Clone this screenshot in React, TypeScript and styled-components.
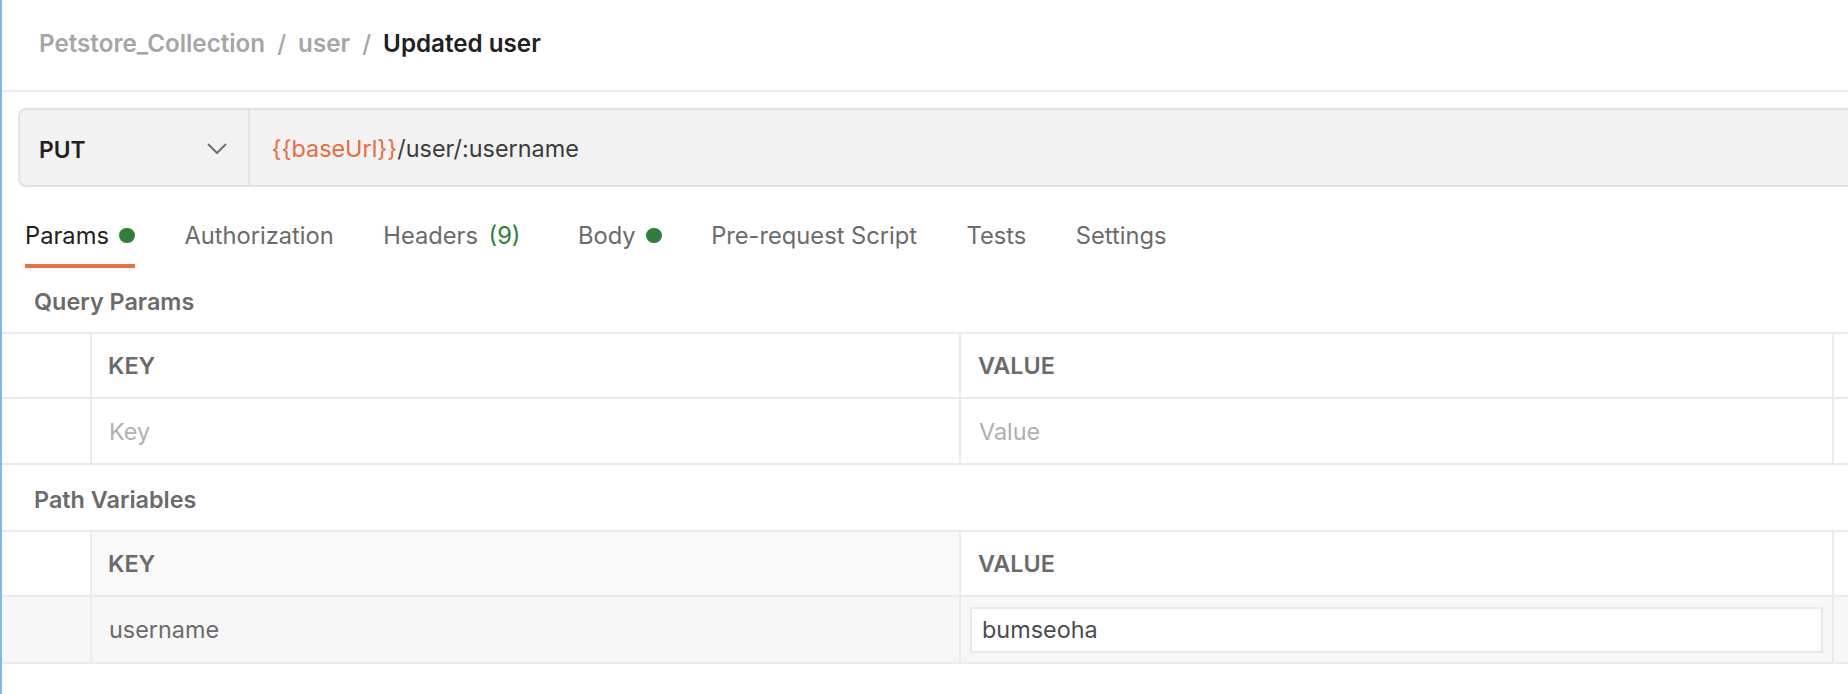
import React from "react";
import styled, { createGlobalStyle } from "styled-components";

const GlobalStyle = createGlobalStyle`
  html, body { margin: 0; padding: 0; background: #ffffff; }
  body { font-family: Inter, "Noto Sans", sans-serif; overflow: hidden; }
  * { box-sizing: border-box; }
`;

const LINE = "#ebebeb";

const Page = styled.div`
  display: flex;
  flex-direction: column;
  width: 1848px;
  height: 694px;
  overflow: hidden;
  border-left: 2px solid #82b4f8;
  background: #ffffff;
`;

const Header = styled.header`
  display: flex;
  align-items: center;
  gap: 12px;
  height: 92px;
  padding: 0 0 4px 37px;
  border-bottom: 2px solid #ededed;
  font-size: 24.2px;
  font-weight: 600;
  color: #a6a6a6;
  white-space: nowrap;
`;

const Crumb = styled.span<{ $current?: boolean }>`
  color: ${p => (p.$current ? "#212121" : "#a6a6a6")};
`;

const Sep = styled.span`
  color: #a6a6a6;
  font-weight: 500;
`;

const UrlArea = styled.div`
  display: flex;
  padding: 16px 0 0 16px;
  margin-right: -24px;
`;

const UrlBar = styled.div`
  display: flex;
  align-items: stretch;
  flex: 1;
  height: 79px;
  border: 2px solid #e3e3e3;
  border-radius: 8px;
  background: #f2f2f2;
`;

const Method = styled.div`
  display: flex;
  align-items: center;
  justify-content: space-between;
  width: 230px;
  padding: 3px 21px 0 19px;
  border-right: 2px solid #e3e3e3;
  font-size: 22.8px;
  font-weight: 600;
  color: #212121;
`;

const Chevron = styled.svg`
  width: 20px;
  height: 12px;
  flex: none;
`;

const UrlText = styled.div`
  display: flex;
  align-items: center;
  padding: 2px 0 0 21.5px;
  font-size: 23.4px;
  color: #3c3c3c;
  white-space: nowrap;
`;

const Variable = styled.span`
  color: #e56e43;
`;

const Tabs = styled.nav`
  display: flex;
  gap: 49.5px;
  margin-top: 20px;
  padding-left: 23px;
`;

const Tab = styled.div<{ $active?: boolean; $extra?: number }>`
  display: flex;
  align-items: center;
  gap: 10.5px;
  height: 61px;
  border-bottom: 4px solid ${p => (p.$active ? "#ea7246" : "transparent")};
  margin-right: ${p => p.$extra ?? 0}px;
  font-size: 23.7px;
  color: ${p => (p.$active ? "#212121" : "#6b6b6b")};
  white-space: nowrap;
`;

const Dot = styled.span`
  width: 15.5px;
  height: 15.5px;
  border-radius: 50%;
  background: #317d3b;
  flex: none;
`;

const Count = styled.span`
  color: #317d3b;
`;

const SectionTitle = styled.h3<{ $top?: number }>`
  margin: 0;
  padding: ${p => p.$top ?? 20}px 0 16px 32px;
  line-height: 28px;
  font-size: 23.4px;
  font-weight: 600;
  color: #6b6b6b;
`;

const Table = styled.div`
  display: grid;
  grid-template-columns: 90px 869px 873px 1fr;
  border-top: 2px solid ${LINE};
`;

const Cell = styled.div<{ $h: number; $bg?: string; $last?: boolean; $pad?: number }>`
  display: flex;
  align-items: center;
  height: ${p => p.$h}px;
  padding: 0 ${p => p.$pad ?? 16}px;
  background: ${p => p.$bg ?? "#ffffff"};
  border-bottom: 2px solid ${LINE};
  border-right: ${p => (p.$last ? "none" : `2px solid ${LINE}`)};
  font-size: 23.4px;
  color: #6b6b6b;
  white-space: nowrap;
`;

const HeadLabel = styled.span`
  font-weight: 600;
  color: #6b6b6b;
`;

const Placeholder = styled.span`
  padding-left: 1px;
  color: #b0b0b0;
`;

const KeyText = styled.span`
  padding-left: 1px;
  color: #6b6b6b;
`;

const ValueInput = styled.div`
  display: flex;
  align-items: center;
  width: 100%;
  height: 46px;
  padding: 0 10px;
  background: #ffffff;
  border: 2px solid #e9e9e9;
  font-size: 23.4px;
  color: #4d4d4d;
`;

const HEAD_H = 65;
const BODY_H = 66;

export default function App() {
  return (
    <>
      <GlobalStyle />
      <Page>
        <Header>
          <Crumb>Petstore_Collection</Crumb>
          <Sep>/</Sep>
          <Crumb>user</Crumb>
          <Sep>/</Sep>
          <Crumb $current>Updated user</Crumb>
        </Header>

        <UrlArea>
          <UrlBar>
            <Method>
              <span>PUT</span>
              <Chevron viewBox="0 0 20 12" fill="none">
                <path d="M1.5 1.5 L10 10 L18.5 1.5" stroke="#6b6b6b" strokeWidth="1.8" strokeLinecap="round" strokeLinejoin="round" />
              </Chevron>
            </Method>
            <UrlText>
              <Variable>{"{{baseUrl}}"}</Variable>
              /user/:username
            </UrlText>
          </UrlBar>
        </UrlArea>

        <Tabs>
          <Tab $active>
            Params <Dot />
          </Tab>
          <Tab>Authorization</Tab>
          <Tab $extra={8}>
            Headers <Count>(9)</Count>
          </Tab>
          <Tab>
            Body <Dot />
          </Tab>
          <Tab>Pre-request Script</Tab>
          <Tab>Tests</Tab>
          <Tab>Settings</Tab>
        </Tabs>

        <SectionTitle>Query Params</SectionTitle>
        <Table>
          <Cell $h={HEAD_H} />
          <Cell $h={HEAD_H}><HeadLabel>KEY</HeadLabel></Cell>
          <Cell $h={HEAD_H} $pad={17}><HeadLabel>VALUE</HeadLabel></Cell>
          <Cell $h={HEAD_H} $last />
          <Cell $h={BODY_H} />
          <Cell $h={BODY_H}><Placeholder>Key</Placeholder></Cell>
          <Cell $h={BODY_H} $pad={17}><Placeholder>Value</Placeholder></Cell>
          <Cell $h={BODY_H} $last />
        </Table>

        <SectionTitle $top={21}>Path Variables</SectionTitle>
        <Table>
          <Cell $h={HEAD_H} />
          <Cell $h={HEAD_H} $bg="#f9f9f9"><HeadLabel>KEY</HeadLabel></Cell>
          <Cell $h={HEAD_H} $pad={17}><HeadLabel>VALUE</HeadLabel></Cell>
          <Cell $h={HEAD_H} $last />
          <Cell $h={BODY_H + 1} $bg="#f7f7f7" />
          <Cell $h={BODY_H + 1} $bg="#f7f7f7"><KeyText>username</KeyText></Cell>
          <Cell $h={BODY_H + 1} $bg="#f7f7f7" $pad={9}>
            <ValueInput>bumseoha</ValueInput>
          </Cell>
          <Cell $h={BODY_H + 1} $bg="#f7f7f7" $last />
        </Table>
      </Page>
    </>
  );
}
